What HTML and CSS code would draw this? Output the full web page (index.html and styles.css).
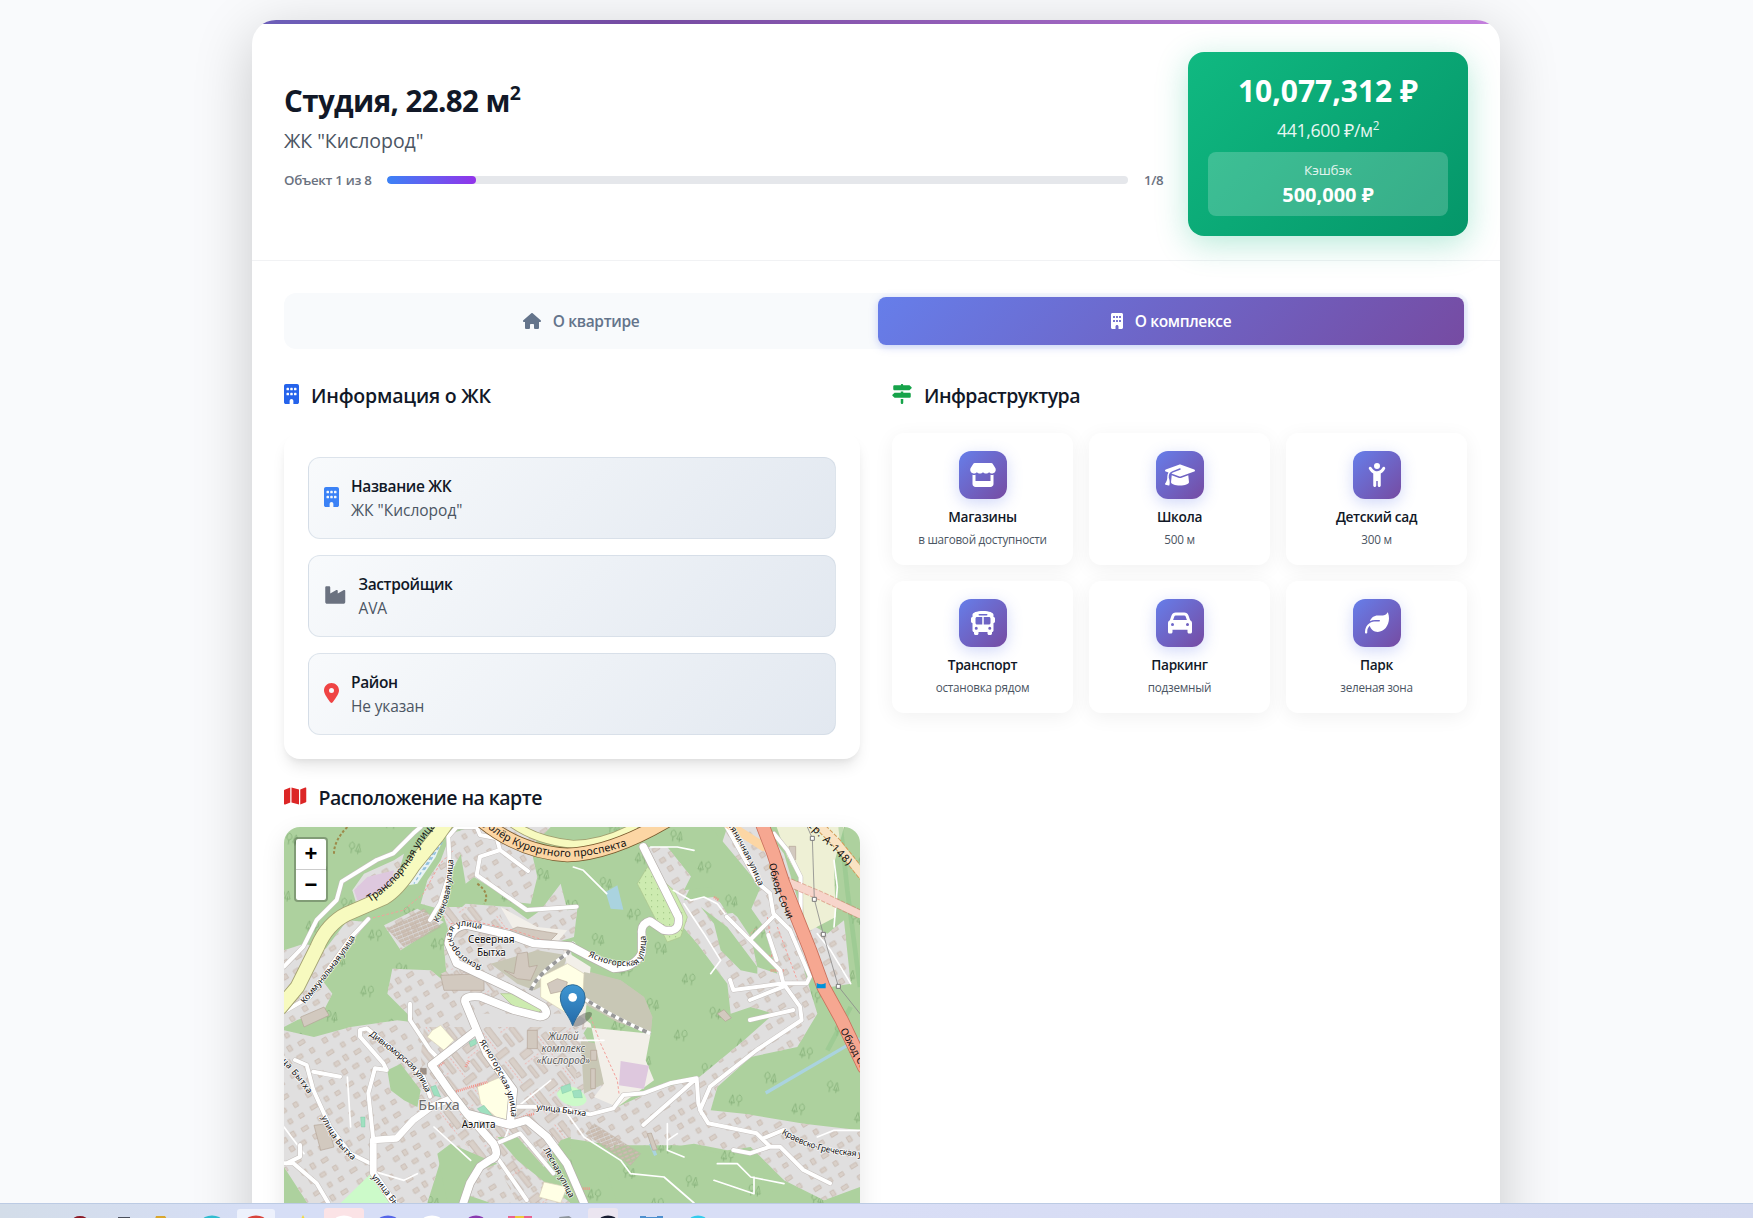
FILE: index.html
```html
<!DOCTYPE html>
<html lang="ru">
<head>
<meta charset="utf-8">
<title>Студия, 22.82 м² — ЖК "Кислород"</title>
<link rel="stylesheet" href="styles.css">
</head>
<body>
<svg class="defs" width="0" height="0" aria-hidden="true">
  <symbol id="i-building" viewBox="0 0 384 512"><path d="M48 0C21.5 0 0 21.5 0 48V464c0 26.5 21.5 48 48 48h96V432c0-26.5 21.5-48 48-48s48 21.5 48 48v80h96c26.5 0 48-21.5 48-48V48c0-26.5-21.5-48-48-48H48zM64 240c0-8.800 7.200-16 16-16h32c8.800 0 16 7.200 16 16v32c0 8.800-7.200 16-16 16H80c-8.800 0-16-7.200-16-16V240zm112-16h32c8.800 0 16 7.200 16 16v32c0 8.800-7.200 16-16 16H176c-8.800 0-16-7.200-16-16V240c0-8.800 7.200-16 16-16zm80 16c0-8.800 7.200-16 16-16h32c8.800 0 16 7.200 16 16v32c0 8.800-7.200 16-16 16H272c-8.800 0-16-7.200-16-16V240zM80 96h32c8.800 0 16 7.200 16 16v32c0 8.800-7.200 16-16 16H80c-8.800 0-16-7.200-16-16V112c0-8.800 7.200-16 16-16zm80 16c0-8.800 7.200-16 16-16h32c8.800 0 16 7.200 16 16v32c0 8.800-7.200 16-16 16H176c-8.800 0-16-7.200-16-16V112zM272 96h32c8.800 0 16 7.200 16 16v32c0 8.800-7.200 16-16 16H272c-8.800 0-16-7.200-16-16V112c0-8.800 7.200-16 16-16z"/></symbol>
  <symbol id="i-home" viewBox="0 0 576 512"><path d="M575.8 255.5c0 18-15 32.1-32 32.1h-32l.7 160.2c0 2.700-.2 5.400-.5 8.100V472c0 22.100-17.900 40-40 40H456c-1.100 0-2.200 0-3.300-.1c-1.400 .1-2.800 .1-4.200 .1H416 392c-22.100 0-40-17.900-40-40V448 384c0-17.700-14.300-32-32-32H256c-17.700 0-32 14.300-32 32v64 24c0 22.100-17.900 40-40 40H160 128.100c-1.500 0-3-.1-4.500-.2c-1.200 .1-2.400 .2-3.600 .2H104c-22.100 0-40-17.900-40-40V360c0-.9 0-1.900 .1-2.800V287.600H32c-18 0-32-14-32-32.100c0-9 3-17 10-24L266.400 8c7-7 15-8 22-8s15 2 21 7L564.800 231.500c8 7 12 15 11 24z"/></symbol>
  <symbol id="i-signs" viewBox="0 0 512 512"><path d="M224 32H64C46.300 32 32 46.300 32 64v64c0 17.700 14.300 32 32 32H441.400c4.200 0 8.300-1.700 11.300-4.700l48-48c6.200-6.200 6.200-16.400 0-22.600l-48-48c-3-3-7.100-4.700-11.300-4.700H288c0-17.700-14.300-32-32-32s-32 14.300-32 32zM480 256c0-17.700-14.300-32-32-32H288V192H224v32H70.600c-4.200 0-8.300 1.700-11.300 4.700l-48 48c-6.200 6.200-6.200 16.400 0 22.600l48 48c3 3 7.100 4.700 11.300 4.700H448c17.700 0 32-14.300 32-32V256zM288 480V384H224v96c0 17.700 14.300 32 32 32s32-14.300 32-32z"/></symbol>
  <symbol id="i-industry" viewBox="0 0 576 512"><path d="M64 32C46.300 32 32 46.300 32 64V304v48 80c0 26.500 21.500 48 48 48H496c26.500 0 48-21.500 48-48V304 152.200c0-18.200-19.400-29.700-35.400-21.100L352 215.400V152.200c0-18.200-19.400-29.700-35.400-21.100L160 215.400V64c0-17.700-14.300-32-32-32H64z"/></symbol>
  <symbol id="i-pin" viewBox="0 0 384 512"><path d="M215.700 499.200C267 435 384 279.400 384 192C384 86 298 0 192 0S0 86 0 192c0 87.400 117 243 168.300 307.200c12.300 15.300 35.100 15.300 47.400 0zM192 128a64 64 0 1 1 0 128 64 64 0 1 1 0-128z"/></symbol>
  <symbol id="i-map" viewBox="0 0 576 512"><path d="M384 476.100L192 421.200V35.900L384 90.800V476.100zm32-1.200V88.400L543.100 37.500c15.800-6.300 32.900 5.300 32.900 22.300V394.600c0 9.800-6 18.600-15.100 22.300L416 474.800zM15.100 95.100L160 37.200V423.600L32.900 474.500C17.100 480.800 0 469.200 0 452.200V117.400c0-9.800 6-18.600 15.100-22.300z"/></symbol>
  <symbol id="i-store" viewBox="0 0 576 512"><path d="M547.600 103.800L490.300 13.100C485.200 5 476.100 0 466.400 0H109.600C99.900 0 90.800 5 85.700 13.100L28.300 103.800c-29.600 46.800-3.400 111.900 51.900 119.400c4 .5 8.100 .8 12.100 .8c26.100 0 49.300-11.400 65.200-29c15.900 17.600 39.100 29 65.200 29c26.100 0 49.300-11.400 65.200-29c15.900 17.600 39.100 29 65.200 29c26.200 0 49.300-11.400 65.200-29c16 17.600 39.100 29 65.200 29c4.100 0 8.100-.3 12.100-.8c55.500-7.400 81.800-72.500 52.100-119.400zM499.700 254.900l-.1 0c-5.300 .7-10.700 1.100-16.200 1.100c-12.400 0-24.300-1.900-35.400-5.300V384H128V250.600c-11.200 3.500-23.200 5.400-35.600 5.400c-5.500 0-11-.4-16.300-1.100l-.1 0c-4.100-.6-8.100-1.300-12-2.300V384v64c0 35.300 28.700 64 64 64H448c35.300 0 64-28.700 64-64V384 252.600c-4 1-8 1.800-12.300 2.300z"/></symbol>
  <symbol id="i-school" viewBox="0 0 640 512"><path d="M320 32c-8.100 0-16.100 1.400-23.700 4.100L15.800 137.400C6.300 140.900 0 149.900 0 160s6.300 19.100 15.800 22.600l57.900 20.900C57.300 229.300 48 259.800 48 291.900v28.100c0 28.400-10.800 57.700-22.300 80.800c-6.500 13-13.900 25.800-22.500 37.600C0 442.700-.9 448.300 .9 453.400s6 8.900 11.200 10.200l64 16c4.200 1.100 8.700 .3 12.400-2s6.300-6.100 7.100-10.400c8.600-42.800 4.300-81.200-2.100-108.700C90.300 344.300 86 329.800 80 316.500V291.900c0-30.200 10.200-58.700 27.900-81.500c12.900-15.500 29.600-28 49.200-35.700l157-61.700c8.200-3.200 17.500 .8 20.700 9s-.8 17.500-9 20.700l-157 61.700c-12.400 4.900-23.300 12.400-32.200 21.600l159.600 57.600c7.600 2.700 15.600 4.100 23.700 4.100s16.100-1.400 23.700-4.100L624.200 182.600c9.500-3.400 15.800-12.500 15.800-22.600s-6.300-19.100-15.800-22.600L343.700 36.100C336.100 33.400 328.100 32 320 32zM128 408c0 35.300 86 72 192 72s192-36.700 192-72L496.700 262.600 354.500 314c-11.100 4-22.800 6-34.500 6s-23.500-2-34.500-6L143.300 262.600 128 408z"/></symbol>
  <symbol id="i-child" viewBox="0 0 384 512"><path d="M256 64A64 64 0 1 0 128 64a64 64 0 1 0 128 0zM152.900 169.300c-23.700-8.400-44.500-24.300-58.800-45.800L74.600 94.200C64.800 79.500 45 75.600 30.200 85.400s-18.700 29.700-8.900 44.400L40.900 159c18.100 27.100 42.800 48.400 71.100 62.400V480c0 17.700 14.300 32 32 32s32-14.300 32-32V384h32v96c0 17.700 14.300 32 32 32s32-14.300 32-32V221.600c29.100-14.200 54.400-36.200 72.700-64.200l18.200-27.900c9.600-14.800 5.400-34.600-9.400-44.300s-34.600-5.500-44.300 9.400L291 122.400c-21.800 33.400-58.900 53.600-98.800 53.600c-12.600 0-24.900-2-36.600-5.800c-.9-.3-1.800-.7-2.700-.9z"/></symbol>
  <symbol id="i-bus" viewBox="0 0 576 512"><path d="M288 0C422.400 0 512 35.200 512 80V96l0 32c17.700 0 32 14.300 32 32v64c0 17.700-14.300 32-32 32l0 160c0 17.700-14.300 32-32 32v32c0 17.700-14.300 32-32 32H416c-17.700 0-32-14.300-32-32V448H192v32c0 17.700-14.300 32-32 32H128c-17.700 0-32-14.300-32-32l0-32c-17.700 0-32-14.300-32-32l0-160c-17.700 0-32-14.300-32-32V160c0-17.700 14.300-32 32-32h0V96h0V80C64 35.200 153.600 0 288 0zM128 160v96c0 17.700 14.300 32 32 32H272V128H160c-17.700 0-32 14.300-32 32zM304 288H416c17.700 0 32-14.300 32-32V160c0-17.700-14.300-32-32-32H304V288zM144 400a32 32 0 1 0 0-64 32 32 0 1 0 0 64zm288 0a32 32 0 1 0 0-64 32 32 0 1 0 0 64zM384 80c0-8.800-7.200-16-16-16H208c-8.800 0-16 7.200-16 16s7.200 16 16 16H368c8.800 0 16-7.200 16-16z"/></symbol>
  <symbol id="i-car" viewBox="0 0 512 512"><path d="M135.200 117.400L109.100 192H402.900l-26.100-74.600C372.300 104.600 360.200 96 346.600 96H165.400c-13.600 0-25.700 8.600-30.200 21.400zM39.600 196.800L74.800 96.300C88.300 57.800 124.600 32 165.400 32H346.600c40.800 0 77.100 25.800 90.600 64.300l35.200 100.500c23.200 9.600 39.600 32.500 39.600 59.200V400v48c0 17.700-14.300 32-32 32H448c-17.700 0-32-14.300-32-32V400H96v48c0 17.700-14.300 32-32 32H32c-17.700 0-32-14.300-32-32V400 256c0-26.700 16.400-49.600 39.600-59.200zM128 288a32 32 0 1 0 -64 0 32 32 0 1 0 64 0zm288 32a32 32 0 1 0 0-64 32 32 0 1 0 0 64z"/></symbol>
  <symbol id="i-leaf" viewBox="0 0 512 512"><path d="M272 96c-78.600 0-145.100 51.500-167.700 122.500c33.600-17 71.500-26.500 111.700-26.500h88c8.800 0 16 7.200 16 16s-7.200 16-16 16H288 216c-16.600 0-32.700 1.900-48.200 5.400c-25.900 5.900-50 16.400-71.400 30.700C38.300 298.800 0 364.900 0 440v16c0 13.300 10.700 24 24 24s24-10.700 24-24V440c0-48.700 20.700-92.500 53.800-123.200C121.600 392.300 190.300 448 272 448l1 0c132.100-.7 239-130.900 239-291.400c0-42.600-7.500-83.100-21.100-119.600c-2.600-6.900-12.700-6.600-16.200-.1C455.900 72.100 418.700 96 376 96L272 96z"/></symbol>
</svg>

<main class="card">
  <header class="head">
    <div class="head-main">
      <h1 class="title">Студия, 22.82 м<sup>2</sup></h1>
      <p class="complex">ЖК "Кислород"</p>
      <div class="progress">
        <span class="progress-label">Объект 1 из 8</span>
        <div class="track"><div class="fill" style="width:12%"></div></div>
        <span class="progress-count">1/8</span>
      </div>
    </div>
    <div class="price">
      <div class="price-total">10,077,312 ₽</div>
      <div class="price-m2">441,600 ₽/м<sup>2</sup></div>
      <div class="cashback">
        <div class="cashback-label">Кэшбэк</div>
        <div class="cashback-sum">500,000 ₽</div>
      </div>
    </div>
  </header>

  <div class="content">
    <nav class="tabs">
      <button class="tab"><svg class="ico home"><use href="#i-home"/></svg><span>О квартире</span></button>
      <button class="tab active"><svg class="ico bld"><use href="#i-building"/></svg><span>О комплексе</span></button>
    </nav>

    <div class="columns">
      <section class="col">
        <h2 class="h2"><svg class="w15 blue2"><use href="#i-building"/></svg><span class="h-info">Информация о ЖК</span></h2>
        <div class="panel">
          <div class="item"><svg class="w15 blue"><use href="#i-building"/></svg><div><div class="k">Название ЖК</div><div class="v v1">ЖК "Кислород"</div></div></div>
          <div class="item"><svg class="w22 gray"><use href="#i-industry"/></svg><div><div class="k">Застройщик</div><div class="v">AVA</div></div></div>
          <div class="item"><svg class="w15 red"><use href="#i-pin"/></svg><div><div class="k">Район</div><div class="v">Не указан</div></div></div>
        </div>
        <h2 class="h2 h2-map"><svg class="w22 red2"><use href="#i-map"/></svg><span class="h-map">Расположение на карте</span></h2>
        <div class="map">
          <svg class="map-canvas" viewBox="0 0 1728 1200">
            <defs>
              <pattern id="trees" width="190" height="170" patternUnits="userSpaceOnUse" patternTransform="rotate(8)">
                <g fill="none" stroke="#82ae76" stroke-width="2.400">
                  <path d="M20 50v-14M20 36c-12 0-8-18 0-20c8 2 12 20 0 20M40 50v-16M32 42l8-24l8 24z"/>
                  <path d="M115 130v-14M107 122l8-24l8 24zM136 130v-14M136 116c-12 0-8-18 0-20c8 2 12 20 0 20"/>
                </g>
              </pattern>
              <pattern id="houses" width="128" height="112" patternUnits="userSpaceOnUse" patternTransform="rotate(-32)">
                <g fill="#d9d0c9" stroke="#c3b5aa" stroke-width="2">
                  <path d="M6 8h17v13h-17zM40 4h13v17h-13zM76 10h20v12h-20zM14 40h14v15h-14zM50 44h18v12h-18zM94 46h13v14h-13zM4 82h22v11h-22zM54 80h12v14h-12zM90 84h15v12h-15z"/>
                </g>
              </pattern>
              <pattern id="blocks" width="120" height="124" patternUnits="userSpaceOnUse" patternTransform="rotate(52)">
                <g fill="#d9d0c9" stroke="#bfb0a5" stroke-width="2">
                  <path d="M8 8h66v17h-66zM90 6h18v40h-18zM8 44h48v14h-48zM12 76h22v34h-22zM52 74h52v15h-52zM58 104h42v12h-42z"/>
                </g>
                <path d="M4 34h80M46 66v50" stroke="#f3a09a" stroke-width="2" stroke-dasharray="6 5" fill="none"/>
              </pattern>
              <pattern id="garages" width="16" height="12" patternUnits="userSpaceOnUse" patternTransform="rotate(-22)">
                <path fill="#cdbfb3" stroke="#b3a092" d="M0 1h14v8h-14z"/>
              </pattern>
              <pattern id="dots" width="18" height="18" patternUnits="userSpaceOnUse"><circle cx="5" cy="5" r="1.500" fill="#7da864"/></pattern>
              <linearGradient id="pinfill" x1="0" y1="0" x2="0" y2="1"><stop offset="0" stop-color="#3f97d3"/><stop offset="1" stop-color="#256aa8"/></linearGradient>

              <path id="residential" d="M0 370L60 350L125 365L190 280L250 285L115 460L145 500L120 550L40 579L0 600Z
                M500 20L560 0L800 0L740 60L760 150L740 230L690 225L570 150L545 170L530 80L505 130L480 250L410 230L430 160L470 100Z
                M205 190L240 140L330 100L360 80L340 150L300 210L220 240Z
                M300 295L400 245L480 285L350 370Z
                M770 250L830 170L850 250L880 245L870 330L820 345L700 300Z
                M325 425L440 430L490 470L480 360L500 270L545 230L680 240L860 370L910 600L850 700L440 700L370 560L310 500Z
                M1090 60L1150 60L1230 160L1200 220L1290 210L1360 270L1400 330L1420 420L1480 440L1440 300L1350 170L1310 60L1330 0L1440 0L1500 80L1560 280L1630 320L1680 280L1700 470L1640 480L1560 430L1600 560L1540 660L1400 690L1300 780L1280 850L1380 860L1560 890L1728 910L1728 1080L1620 1120L1500 1060L1400 960L1330 970L1230 950L1160 960L1220 1010L1130 1080L1040 1000L960 950L858 935L858 1128L620 1128L540 1100L470 1000L430 1128L70 1128L0 1020L0 610L90 630L200 600L340 580L500 600L900 620L1000 840L1110 790L1240 755L1380 640L1470 560L1400 540L1340 560L1330 470L1240 350L1180 280L1150 190Z"/>
              <path id="p-trans" d="M258 226Q350 165 395 80T500 -30"/>
              <path id="p-komm" d="M62 532Q130 450 175 390T215 320"/>
              <path id="p-klen" d="M463 288Q490 240 498 190T508 85"/>
              <path id="p-yas1" d="M594 414Q520 390 503 330Q505 290 555 299Q600 304 625 324"/>
              <path id="p-yas2" d="M912 388Q1000 430 1060 412Q1090 390 1084 315"/>
              <path id="p-trunk" d="M598 -8Q700 85 850 90Q960 88 1100 30"/>
              <path id="p-obh" d="M1455 110Q1465 180 1510 275L1530 330"/>
              <path id="p-obh2" d="M1668 610L1760 780"/>
              <path id="p-glin" d="M1330 -8Q1390 90 1425 180L1450 240"/>
              <path id="p-a148" d="M1570 -5Q1630 55 1710 135"/>
              <path id="p-divn" d="M255 625Q330 680 370 715T428 805"/>
              <path id="p-yas3" d="M585 645Q650 740 672 810T668 875"/>
              <path id="p-byt1" d="M-20 690Q20 730 76 806"/>
              <path id="p-byt2" d="M112 870Q145 950 210 1004"/>
              <path id="p-byt3" d="M262 1050L375 1190"/>
              <path id="p-byt4" d="M757 848Q830 856 915 869"/>
              <path id="p-les" d="M778 968Q820 1040 860 1120"/>
              <path id="p-kr" d="M1492 920Q1580 975 1690 985L1780 997"/>
            </defs>
            <rect width="1728" height="1200" fill="#add19e"/>
            <rect width="1728" height="1200" fill="url(#trees)"/>

            <use href="#residential" fill="#e0dfdf"/>
            <use href="#residential" fill="url(#houses)"/>
            <path fill="#e0dfdf" d="M470 240L660 240L690 340L500 330ZM540 560L900 560L850 900L620 1000L430 820L410 690Z"/>
            <path fill="url(#blocks)" d="M470 240L640 240L680 340L500 330ZM470 440L560 400L640 500L560 520ZM420 600L900 600L850 900L620 1040L430 820L410 690ZM600 940L860 900L858 1128L700 1128Z"/>
            <path fill="#add19e" d="M1200 190L1280 180L1330 260L1400 250L1430 180L1330 60L1280 0L1120 0L1170 80L1240 110ZM1250 240L1330 300L1420 420L1420 440L1370 430L1310 370L1290 290ZM310 730L350 710L410 790L400 840L360 820L320 790ZM460 980L500 950L640 1010L560 1040L540 1128L490 1128ZM830 940L860 930L860 1128L700 1000L640 930L700 930L780 1020ZM990 955L1180 955L1340 985L1400 985L1500 1060L1430 1128L1000 1128L970 1040Z"/>
            <path fill="url(#trees)" d="M1200 190L1330 260L1400 250L1330 60L1280 0L1120 0ZM990 955L1180 955L1340 985L1500 1060L1430 1128L1000 1128Z"/>
            <!-- open ground, school plots, parks -->
            <path fill="#c8c7b5" d="M620 410L760 370L850 385L830 450L750 490L700 470ZM900 430L1010 460L1080 510L1105 570L1100 620L1000 585L900 530ZM890 640L940 650L960 770L900 800Z"/>
            <path fill="#f2efe9" d="M650 240L760 300L850 310L820 345L690 310ZM840 370L920 420L900 600L1100 620L1085 700L1110 760L1000 840L930 810L960 770L920 590L880 560L850 420Z"/>
            <path fill="#c8c7b5" d="M900 435L1010 460L1080 510L1105 570L1100 620L1000 585L890 520Z"/>
            <path fill="#ffffe5" stroke="#d8d0b8" stroke-width="2" d="M770 450L850 410L900 440L895 540L850 560L770 510ZM445 610L470 595L510 640L480 670L430 630ZM580 780L650 750L680 800L670 900L590 830ZM780 1065L850 1080L830 1128L765 1110Z"/>
            <path fill="#dec8de" d="M1010 702L1095 716L1080 786L1005 775ZM210 190L250 150L330 130L310 210L220 220Z"/>
            <path fill="#cdebb0" stroke="#acc48e" stroke-width="2" d="M1090 120L1060 170L1150 345L1190 330L1210 270L1170 190ZM650 500L700 500L775 545L760 560L690 540Z"/>
            <path fill="url(#dots)" d="M1090 120L1060 170L1150 345L1190 330L1210 270Z"/>
            <path fill="#ccfac9" d="M170 1128L260 1040L330 1110L320 1140L170 1140ZM818 800C840 760 900 780 908 820C900 850 830 840 818 800Z"/>
            <path fill="#9fe0c0" stroke="#6cbf98" d="M580 845L600 835L628 870L610 880ZM555 645L575 635L578 650L560 660ZM830 780L858 770L862 790L835 800ZM230 870L243 870L243 900L232 900ZM865 792L890 788L895 812L870 812ZM440 780L455 775L470 810L450 805Z"/>
            <path fill="#eef0d5" d="M1478 0L1680 0L1650 110L1655 270L1560 320L1555 170L1510 90Z"/>
            <path fill="#e8f3f5" d="M430 70L480 30L455 90L400 170L340 180Z"/>
            <path stroke="#92c1de" stroke-width="4" stroke-dasharray="10 8" fill="none" d="M440 60L360 160M460 60L390 170M475 45L420 130"/>
            <path fill="#aad3df" d="M965 195L1000 175L1018 248L980 245Z"/>
            <path stroke="#aad3df" stroke-width="10" fill="none" d="M1445 798L1690 655L1728 635M1100 950L1115 985"/>
            <path stroke="#8fc58a" stroke-opacity=".5" stroke-width="14" fill="none" d="M1670 0L1690 190L1728 480M1630 670L1700 540"/>
            <path fill="url(#garages)" stroke="#bcb0a4" d="M310 305L420 245L470 300L360 360ZM905 920L930 890L1070 980L1040 1015Z"/>
            <g fill="#d2c9bf" stroke="#b3a497" stroke-width="2">
              <path d="M660 430L690 440L700 380L730 375L735 420L760 415L740 460L700 455ZM790 470L820 455L850 465L845 490L800 500ZM630 330L700 300L820 320L800 340ZM470 445L600 440L600 490L480 490ZM90 895L130 890L150 960L110 970ZM50 570L120 540L135 565L60 600Z"/>
              <path d="M1515 58h20v40h-20zM1300 560l20-12l22 25l-18 10zM1090 920l12-2l18 50l-14 2zM920 670h18v30h-18zM920 725h14v60h-14zM730 610h30v55h-30z"/>
            </g>
            <path stroke="#f49187" stroke-width="8" stroke-dasharray="3 3" fill="none" d="M510 795L610 765M460 720L480 705M690 880L750 860M545 720L555 700M1460 430L1500 430M890 1085L920 1085M1290 210L1305 220M1450 390L1470 385"/>
            <path stroke="#f3a09a" stroke-width="3" stroke-dasharray="8 6" fill="none" d="M253 276L358 250L418 200L468 110L508 70M500 290L560 280L690 310L780 340M920 570L950 650L1000 760L1005 800M1450 270L1470 400M1480 300L1540 460M1390 330L1420 300"/>
            <path stroke="#9d8a4a" stroke-width="6" stroke-dasharray="8 6" fill="none" d="M190 0Q150 40 150 80M580 170Q620 200 600 230"/>
            <path stroke="#fff" stroke-width="11" fill="none" d="M740 490Q760 440 850 380L870 345M850 480Q960 560 1100 620"/>
            <path stroke="#999" stroke-width="11" stroke-dasharray="14 12" fill="none" d="M740 490Q760 440 850 380L870 345M850 480Q960 560 1100 620"/>

            <!-- streets: each tier is a casing under a lighter core -->
            <g fill="none" stroke-linejoin="round" stroke-linecap="round">
              <path class="lane" d="M868 120L898 130L968 200M1168 190L1220 220L1260 210L1300 230L1330 270M1100 60L1180 60L1230 70M1200 230L1260 320L1310 400L1280 440M450 900L560 1000M850 860L900 930L1010 1000L1040 1040L1140 1050L1230 1128M1300 1010L1360 1010L1400 1050L1500 1070M1290 1060L1350 1080L1410 1100L1410 1050M1150 890L1150 970L1200 990M1650 300L1660 180L1650 100M1600 320L1640 370L1700 470M1600 930L1650 910L1728 910M1150 940L1180 920M260 1030L360 1060L400 1040M190 750L200 900M60 980L0 900M660 940L700 840L800 760M880 640L960 640"/>
              <path class="st-c" d="M0 419L58 359L98 279L158 219L173 164L278 99L328 79L388 19L410 0M253 276L203 329L138 419L78 509L0 554M518 0L493 29L496 89L493 149L468 229L438 279M518 0L578 0L588 24L638 34L648 69L588 89L578 144L728 249L878 239M648 69L732 132M1328 0L1423 169L1458 199L1468 259L1518 309L1578 449L1568 469L1498 469L1348 489L1338 459M1468 269L1398 339L1328 269M1398 339L1488 429L1498 469L1548 539L1553 579L1418 669L1278 779L1248 849L1273 889L1418 919L1458 959L1488 959L1558 1029L1638 1069M1498 479L1398 519M1398 579L1528 549M1453 324L1478 399M1238 754L1243 829L1253 859M1238 754L1078 894M1238 754L1158 769L1078 799L1018 804L988 844L918 862L858 849L748 839L700 839M1458 959L1398 979L1348 969M1438 934L1498 909M378 530L378 579L438 669L468 699M33 699L68 714L88 789L138 899L198 979L258 1009M0 1009L28 1009L98 1069L133 1128M8 1009L48 989L48 954M638 949L708 919L808 1039M638 989L728 1119M88 734L168 749M1470 20L1510 70L1550 150L1550 270"/>
              <path class="st" d="M0 419L58 359L98 279L158 219L173 164L278 99L328 79L388 19L410 0M253 276L203 329L138 419L78 509L0 554M518 0L493 29L496 89L493 149L468 229L438 279M518 0L578 0L588 24L638 34L648 69L588 89L578 144L728 249L878 239M648 69L732 132M1328 0L1423 169L1458 199L1468 259L1518 309L1578 449L1568 469L1498 469L1348 489L1338 459M1468 269L1398 339L1328 269M1398 339L1488 429L1498 469L1548 539L1553 579L1418 669L1278 779L1248 849L1273 889L1418 919L1458 959L1488 959L1558 1029L1638 1069M1498 479L1398 519M1398 579L1528 549M1453 324L1478 399M1238 754L1243 829L1253 859M1238 754L1078 894M1238 754L1158 769L1078 799L1018 804L988 844L918 862L858 849L748 839L700 839M1458 959L1398 979L1348 969M1438 934L1498 909M378 530L378 579L438 669L468 699M33 699L68 714L88 789L138 899L198 979L258 1009M0 1009L28 1009L98 1069L133 1128M8 1009L48 989L48 954M638 949L708 919L808 1039M638 989L728 1119M88 734L168 749M1470 20L1510 70L1550 150L1550 270"/>
              <path class="mid-c" d="M443 839L388 879L338 934L268 939L268 1039L330 1128M443 839L500 815"/>
              <path class="st-c" d="M268 939L253 799L273 724L308 729L298 709L228 629L228 609L248 604L318 659L418 749L438 809"/>
              <path class="mid" d="M443 839L388 879L338 934L268 939L268 1039L330 1128M443 839L500 815"/>
              <path class="st" d="M268 939L253 799L273 724L308 729L298 709L228 629L228 609L248 604L318 659L418 749L438 809"/>
              <path class="big-c" d="M1078 60L1138 179L1183 269Q1190 320 1138 309L1098 282Q1070 290 1073 319L1073 379Q1050 424 988 424L918 389L858 357L748 349L678 324L548 294Q498 300 493 349L518 409L688 489L778 539Q800 565 768 569L688 549L588 509Q540 505 543 524L578 609L443 714L498 794L548 859L678 894L728 879L788 929L848 1009L883 1089L900 1128M578 609L608 679L688 789L678 894M548 859L628 949Q650 990 618 999L588 1019L558 1069L538 1128"/>
              <path class="big" d="M1078 60L1138 179L1183 269Q1190 320 1138 309L1098 282Q1070 290 1073 319L1073 379Q1050 424 988 424L918 389L858 357L748 349L678 324L548 294Q498 300 493 349L518 409L688 489L778 539Q800 565 768 569L688 549L588 509Q540 505 543 524L578 609L443 714L498 794L548 859L678 894L728 879L788 929L848 1009L883 1089L900 1128M578 609L608 679L688 789L678 894M548 859L628 949Q650 990 618 999L588 1019L558 1069L538 1128"/>
              <path stroke="#a2a070" stroke-width="46" d="M500 -30L458 29L388 115Q340 190 300 212L190 260Q130 290 100 360L40 480L-10 540"/>
              <path stroke="#f7fabf" stroke-width="41" d="M500 -30L458 29L388 115Q340 190 300 212L190 260Q130 290 100 360L40 480L-10 540"/>
              <path stroke="#a2a070" stroke-width="26" d="M660 -30Q740 40 868 52Q960 50 1050 0"/>
              <path stroke="#f7fabf" stroke-width="21" d="M660 -30Q740 40 868 52Q960 50 1050 0"/>
              <path stroke="#7a5a2e" stroke-width="44" d="M580 -30Q700 75 850 84Q980 80 1150 -20"/>
              <path stroke="#fcd6a4" stroke-width="39" d="M580 -30Q700 75 850 84Q980 80 1150 -20"/>
              <path stroke="#fcd6a4" stroke-width="26" d="M1330 -10L1440 60"/>
              <path stroke="#d87f6c" stroke-width="28" stroke-opacity=".6" stroke-dasharray="14 4" stroke-linecap="butt" d="M1500 160L1618 210L1728 262"/>
              <path stroke="#f7d5cb" stroke-width="22" d="M1500 160L1618 210L1728 262"/>
              <path stroke="#d29b58" stroke-width="30" stroke-dasharray="12 5" stroke-linecap="butt" d="M1580 -30L1660 50L1740 150"/>
              <path stroke="#fae3c3" stroke-width="24" d="M1580 -30L1660 50L1740 150"/>
              <path stroke="#c9705c" stroke-width="42" d="M1430 -20L1468 79L1498 169L1538 269L1578 369L1618 479L1673 579L1740 720"/>
              <path stroke="#f6a791" stroke-width="37" d="M1430 -20L1468 79L1498 169L1538 269L1578 369L1618 479L1673 579L1740 720"/>
              <path stroke="#8c8c8c" stroke-width="2.500" d="M1585 34L1591 217L1618 322L1663 478L1728 560M1585 34L1570 0"/>
            </g>
            <g fill="#fff" stroke="#777" stroke-width="3"><path d="M1579 28h12v12h-12zM1585 211h12v12h-12zM1612 316h12v12h-12zM1657 472h12v12h-12z"/></g>
            <path fill="#0092da" d="M1598 468Q1611 476 1625 468V484H1598Z"/>
            <path fill="#9b8f86" stroke="#7d7068" d="M409 724h18v18h-18z"/>

            <g class="lbl">
              <text font-size="31" class="nohalo"><textPath href="#p-trans" textLength="305">Транспортная улица</textPath></text>
              <text><textPath href="#p-komm" textLength="252">Коммунальная улица</textPath></text>
              <text><textPath href="#p-klen" textLength="198">Кленовая улица</textPath></text>
              <text><textPath href="#p-yas1" textLength="238">Ясногорская улица</textPath></text>
              <text><textPath href="#p-yas2" textLength="246">Ясногорская улица</textPath></text>
              <text font-size="32" class="nohalo"><textPath href="#p-trunk" textLength="460">ублёр Курортного проспекта</textPath></text>
              <text font-size="30" class="nohalo"><textPath href="#p-obh" textLength="178">Обход Сочи</textPath></text>
              <text font-size="30" class="nohalo"><textPath href="#p-obh2">Обход Сочи</textPath></text>
              <text><textPath href="#p-glin" textLength="208">ляничная улица</textPath></text>
              <text font-size="32" class="nohalo"><textPath href="#p-a148" textLength="172">ер. А-148)</textPath></text>
              <text><textPath href="#p-divn" textLength="246">Дивноморская улица</textPath></text>
              <text><textPath href="#p-yas3" textLength="248">Ясногорская улица</textPath></text>
              <text><textPath href="#p-byt1" textLength="145">ица Бытха</textPath></text>
              <text><textPath href="#p-byt2" textLength="162">улица Бытха</textPath></text>
              <text><textPath href="#p-byt3">улица Бытха</textPath></text>
              <text><textPath href="#p-byt4" textLength="150">улица Бытха</textPath></text>
              <text><textPath href="#p-les" textLength="166">Лесная улица</textPath></text>
              <text><textPath href="#p-kr" textLength="268">Краевско-Греческая ул</textPath></text>
              <g text-anchor="middle">
                <text font-size="30" x="622" y="349">Северная</text>
                <text font-size="30" x="622" y="387">Бытха</text>
                <text font-size="30" x="584" y="903">Аэлита</text>
                <text font-size="43" x="465" y="848" class="town">Бытха</text>
                <g font-size="30" font-style="italic" class="estate">
                  <text x="838" y="638">Жилой</text>
                  <text x="838" y="674">комплекс</text>
                  <text x="838" y="711">«Кислород»</text>
                </g>
              </g>
            </g>
            <ellipse cx="895" cy="577" rx="34" ry="13" transform="rotate(-35 895 577)" fill="#000" opacity=".28"/>
            <path d="M866 596C850 555 829 545 829 510A37 37 0 0 1 903 510C903 545 882 555 866 596Z" fill="url(#pinfill)" stroke="#2e6c97" stroke-width="3"/>
            <circle cx="866" cy="511" r="13" fill="#fff"/>
          </svg>
          <div class="zoom"><span>+</span><span>−</span></div>
        </div>
      </section>

      <section class="col">
        <h2 class="h2"><svg class="w20 green"><use href="#i-signs"/></svg><span class="h-infra">Инфраструктура</span></h2>
        <div class="grid">
          <div class="place"><div class="badge"><svg><use href="#i-store"/></svg></div><div class="pn">Магазины</div><div class="pd">в шаговой доступности</div></div>
          <div class="place"><div class="badge"><svg><use href="#i-school"/></svg></div><div class="pn">Школа</div><div class="pd">500 м</div></div>
          <div class="place"><div class="badge"><svg><use href="#i-child"/></svg></div><div class="pn">Детский сад</div><div class="pd">300 м</div></div>
          <div class="place"><div class="badge"><svg><use href="#i-bus"/></svg></div><div class="pn">Транспорт</div><div class="pd">остановка рядом</div></div>
          <div class="place"><div class="badge"><svg><use href="#i-car"/></svg></div><div class="pn">Паркинг</div><div class="pd">подземный</div></div>
          <div class="place"><div class="badge"><svg><use href="#i-leaf"/></svg></div><div class="pn">Парк</div><div class="pd">зеленая зона</div></div>
        </div>
      </section>
    </div>
  </div>
</main>

<div class="taskbar">
  <svg width="1753" height="15" viewBox="0 0 1753 15">
    <path fill="#edf1fc" d="M237 15V8q0-3 3-3h32q3 0 3 3v7z"/>
    <path fill="#fbe3e6" d="M324 15V7q0-3 3-3h34q3 0 3 3v8z"/>
    <path fill="#ebe5f0" d="M588 15V7q0-3 3-3h24q3 0 3 3v8z"/>
    <ellipse cx="80" cy="17" rx="8" ry="5" fill="#8c1825"/>
    <path fill="#4a4f5c" d="M118 13h12v2h-12z"/>
    <path fill="#d9a62c" d="M156 12h9l2 3h-12z"/>
    <ellipse cx="212" cy="17" rx="10" ry="5.500" fill="#2fbcd0"/>
    <ellipse cx="256" cy="17" rx="10" ry="5.500" fill="#d8433b"/>
    <path fill="#f2dc3c" d="M301 15l2-4l2 4z"/>
    <ellipse cx="344" cy="17" rx="10" ry="5.500" fill="#fff"/>
    <ellipse cx="388" cy="17" rx="10" ry="5.500" fill="#5566e8"/>
    <ellipse cx="432" cy="17" rx="10" ry="5.500" fill="#fff"/>
    <ellipse cx="476" cy="17" rx="9" ry="5.500" fill="#8a3ab0"/>
    <path fill="#e8618f" d="M508 12h24v3h-24z"/><path fill="#f0c93a" d="M515 12h9v3h-9z"/>
    <path fill="#8d949c" d="M559 13l10-1l4 3h-13z"/>
    <ellipse cx="608" cy="17" rx="9" ry="5.500" fill="#171c30"/>
    <path fill="#4d8fce" d="M640 12h6v1h11v-1h6v3h-23z"/>
    <ellipse cx="698" cy="17" rx="9" ry="5.500" fill="#33cbec"/>
  </svg>
</div>
</body>
</html>
```
FILE: styles.css
```css
* { box-sizing: border-box; margin: 0; padding: 0; }

html, body { height: 100%; overflow: hidden; }

body {
  font-family: "Open Sans", "Noto Sans", sans-serif;
  font-size: 16px;
  line-height: 24px;
  color: #111827;
  background: #f9fafc;
}

.defs { position: absolute; }
svg { fill: currentColor; display: block; flex: none; }

.card {
  width: 1248px;
  height: 1300px;
  margin: 20px auto 0 252px;
  background: #fff;
  border-radius: 24px;
  overflow: clip;
  box-shadow: 0 14px 60px rgba(0, 0, 0, .2);
}
.card::before {
  content: "";
  display: block;
  height: 4px;
  background: linear-gradient(90deg, #6c5fb9 0%, #764ba2 32%, #c47fdd 100%);
}

.head {
  display: flex;
  align-items: flex-start;
  gap: 24px;
  height: 237px;
  padding: 28px 32px 24px;
  border-bottom: 1px solid #f1f2f4;
}
.head-main { flex: 1; padding-top: 26px; }
.title {
  font-size: 29.500px;
  line-height: 45px;
  font-weight: 700;
  letter-spacing: -.6px;
  white-space: nowrap;
}
sup { font-size: 66%; line-height: 0; vertical-align: .6em; }
.complex { font-size: 19.500px; line-height: 28px; letter-spacing: -.07px; color: #4b5563; margin-top: 4px; }
.progress {
  display: flex;
  align-items: center;
  gap: 16px;
  margin-top: 15px;
  font-size: 13.300px;
  line-height: 20px;
  font-weight: 600;
  color: #6b7280;
  white-space: nowrap;
}
.progress-label { width: 87px; letter-spacing: -.3px; }
.progress-count { width: 20px; letter-spacing: -.4px; }
.track { flex: 1; height: 8px; border-radius: 4px; background: #e5e7eb; overflow: hidden; }
.fill { height: 8px; border-radius: 4px; background: linear-gradient(90deg, #3b82f6, #9333ea); }

.price {
  width: 280px;
  height: 184px;
  padding: 20px;
  border-radius: 16px;
  color: #fff;
  text-align: center;
  background: linear-gradient(135deg, #10b981, #059669);
  box-shadow: 0 8px 32px rgba(16, 185, 129, .3);
}
.price-total { font-size: 30px; line-height: 38px; font-weight: 700; letter-spacing: 0; }
.price-m2 { font-size: 17.800px; line-height: 28px; letter-spacing: -.4px; margin-top: 6px; opacity: .9; }
.cashback { height: 64px; margin-top: 8px; padding: 8px; border-radius: 8px; background: rgba(255, 255, 255, .2); }
.cashback-label { font-size: 13.500px; line-height: 20px; letter-spacing: -.1px; opacity: .85; }
.cashback-sum { font-size: 20px; line-height: 29px; font-weight: 700; letter-spacing: 0; }

.content { padding: 32px; }
.tabs {
  display: flex;
  gap: 4px;
  padding: 4px;
  height: 56px;
  border-radius: 12px;
  background: #f8fafc;
}
.tab {
  flex: 1;
  display: flex;
  align-items: center;
  justify-content: center;
  gap: 12px;
  border: 0;
  border-radius: 8px;
  background: none;
  color: #64748b;
  font: 600 15.500px/24px "Open Sans", sans-serif;
  letter-spacing: -.35px;
}
.tab.active {
  color: #fff;
  background: linear-gradient(135deg, #667eea, #764ba2);
  box-shadow: 0 2px 8px rgba(102, 126, 234, .35);
}
.ico { height: 16px; }
.home { width: 18px; }
.bld { width: 12px; }

.columns { display: grid; grid-template-columns: 1fr 1fr; gap: 32px; width: 1183px; margin-top: 32px; }
.h2 {
  display: flex;
  align-items: center;
  gap: 12px;
  height: 28px;
  margin-bottom: 24px;
  font-size: 19.500px;
  line-height: 30px;
  font-weight: 600;
  letter-spacing: -.55px;
}
.h2 span { padding-top: 1px; }
.h-info { letter-spacing: -.2px; }
.h2 svg { margin-top: -2px; }
.h2-map { margin: 24px 0 16px; }
.w15 { width: 15px; height: 20px; }
.w20 { width: 20px; height: 20px; }
.w22 { width: 22.500px; height: 20px; }
.blue { color: #3b82f6; }
.blue2 { color: #2563eb; }
.gray { color: #6b7280; }
.red { color: #ef4444; }
.red2 { color: #dc2626; }
.green { color: #16a34a; }

.panel {
  display: flex;
  flex-direction: column;
  gap: 16px;
  padding: 24px;
  border-radius: 16px;
  background: #fff;
  box-shadow: 0 10px 15px -3px rgba(0, 0, 0, .1), 0 4px 6px -2px rgba(0, 0, 0, .05);
}
.item {
  display: flex;
  align-items: center;
  gap: 12px;
  height: 82px;
  padding: 16px 15px;
  border: 1px solid rgba(203, 213, 225, .6);
  border-radius: 12px;
  background: linear-gradient(135deg, #f8fafc, #e2e8f0);
}
.item svg { margin-top: -2px; }
.k { font-size: 15.500px; font-weight: 600; letter-spacing: -.37px; }
.v { font-size: 15.500px; letter-spacing: -.15px; color: #4b5563; }
.v1 { letter-spacing: 0; }

.map {
  position: relative;
  height: 400px;
  border-radius: 16px;
  overflow: hidden;
  box-shadow: 0 8px 24px rgba(0, 0, 0, .1);
}
.map-canvas { width: 576px; height: 400px; }
.st-c { stroke: #c4bfbc; stroke-width: 15; }
.st { stroke: #fff; stroke-width: 12; }
.lane { stroke: #fff; stroke-width: 5; }
.mid-c { stroke: #c4bfbc; stroke-width: 23; }
.mid { stroke: #fff; stroke-width: 20; }
.big-c { stroke: #b5afab; stroke-width: 27; }
.big { stroke: #fff; stroke-width: 23; }
.lbl {
  font-family: "Noto Sans", sans-serif;
  font-size: 26px;
  fill: #111;
  stroke: #fff;
  stroke-width: 5px;
  stroke-opacity: .75;
  stroke-linejoin: round;
  paint-order: stroke;
}
.nohalo { stroke: none; }
.town { fill: #6b6b6b; }
.estate { fill: #5a5a5a; stroke-width: 4px; }

.zoom {
  position: absolute;
  left: 10px;
  top: 10px;
  width: 34px;
  height: 65px;
  border: 2px solid rgba(0, 0, 0, .25);
  border-radius: 4px;
  background: #fff;
  background-clip: padding-box;
  color: #000;
  font: bold 22px/30px "Liberation Sans", sans-serif;
  text-align: center;
}
.zoom span { display: block; height: 30px; }
.zoom span:first-child { height: 31px; border-bottom: 1px solid #ccc; }

.grid { display: grid; grid-template-columns: repeat(3, 1fr); gap: 16px; }
.place {
  height: 132px;
  padding-top: 18px;
  border-radius: 12px;
  background: #fff;
  text-align: center;
  box-shadow: 0 4px 20px rgba(0, 0, 0, .06);
}
.badge {
  display: flex;
  align-items: center;
  justify-content: center;
  width: 48px;
  height: 48px;
  margin: 0 auto 8px;
  border-radius: 12px;
  color: #fff;
  background: linear-gradient(135deg, #667eea, #764ba2);
  box-shadow: 0 4px 15px rgba(102, 126, 234, .3);
}
.badge svg { width: 30px; height: 24px; }
.pn { font-size: 13.700px; line-height: 20px; font-weight: 600; letter-spacing: -.33px; }
.pd { font-size: 11.700px; line-height: 16px; margin-top: 4px; letter-spacing: -.25px; color: #4b5563; white-space: nowrap; }

.taskbar {
  position: fixed;
  left: 0;
  right: 0;
  bottom: 0;
  height: 15px;
  border-top: 1px solid #bccbe4;
  background: linear-gradient(90deg, #d3dde9 0%, #d6def6 15%, #d9def6 50%, #d3d9f0 100%);
}
```
